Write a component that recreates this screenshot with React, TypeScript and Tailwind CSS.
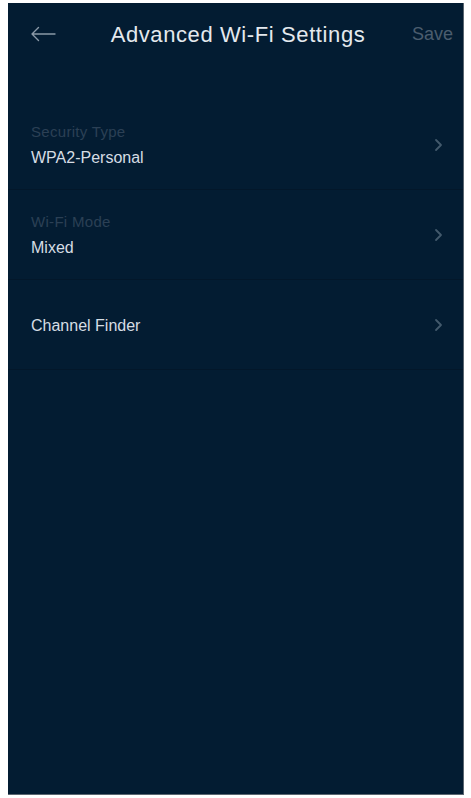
function Chevron() {
  return (
    <svg width="9" height="14" viewBox="0 0 9 14" fill="none" className="shrink-0">
      <path d="M2 2l5 5-5 5" stroke="#43596c" strokeWidth="1.8" strokeLinecap="round" strokeLinejoin="round" />
    </svg>
  );
}

function SettingRow({ label, value }: { label?: string; value: string }) {
  return (
    <div className="h-[90px] flex flex-row items-center justify-between pl-[23px] pr-[20px] border-b border-[#03172a]">
      <div className="flex flex-col gap-[5px] pt-[2px]">
        {label && (
          <p className="font-['Liberation_Sans',Arial,sans-serif] text-[15px] leading-[20px] tracking-[0.3px] text-[#2b4055]">
            {label}
          </p>
        )}
        <p className="font-['Liberation_Sans',Arial,sans-serif] text-[16px] leading-[22px] text-[#d6dde4]">{value}</p>
      </div>
      <Chevron />
    </div>
  );
}

function App() {
  return (
    <div className="w-[471px] h-[798px] bg-white pl-[8px] pr-[7px] pt-[3px] pb-[3px]">
      <div className="w-full h-full bg-[#031c32] border-r border-b border-[#5b6670] flex flex-col">
        <header className="h-[62px] flex flex-row items-center justify-between pl-[22px] pr-[10px] shrink-0">
          <svg width="26" height="16" viewBox="0 0 26 16" fill="none">
            <path d="M25 8H2M8.5 1.5L2 8l6.5 6.5" stroke="#8b99a7" strokeWidth="1.4" strokeLinecap="round" strokeLinejoin="round" />
          </svg>
          <h1 className="font-['Liberation_Sans',Arial,sans-serif] text-[22px] tracking-[0.6px] text-[#e4e9ee] ml-[8px]">
            Advanced Wi-Fi Settings
          </h1>
          <button className="font-['Liberation_Sans',Arial,sans-serif] text-[18px] text-[#4b5d6e]">Save</button>
        </header>
        <section className="mt-[35px] flex flex-col">
          <SettingRow label="Security Type" value="WPA2-Personal" />
          <SettingRow label="Wi-Fi Mode" value="Mixed" />
          <SettingRow value="Channel Finder" />
        </section>
      </div>
    </div>
  );
}

export default App;
